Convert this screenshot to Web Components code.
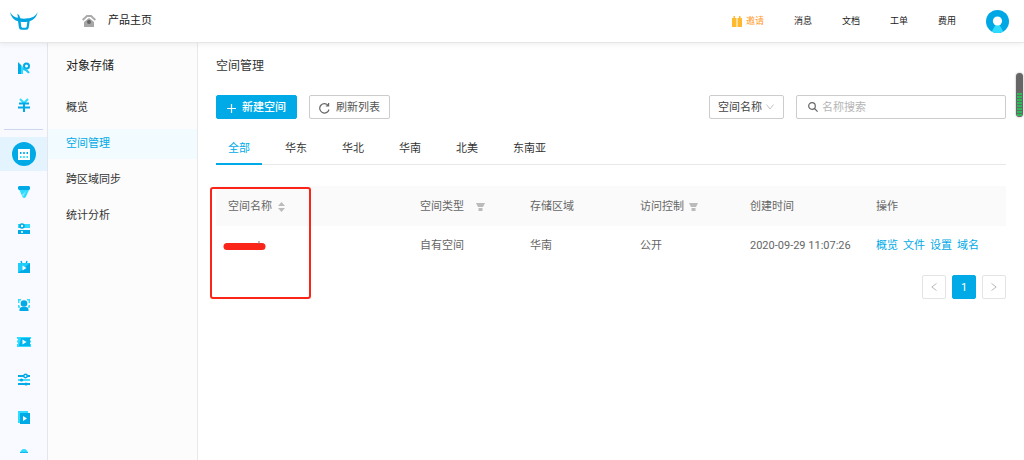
<!DOCTYPE html>
<html lang="zh-CN">
<head>
<meta charset="utf-8">
<meta name="viewport" content="width=device-width, initial-scale=1">
<title>空间管理</title>
<style>
  :root {
    --brand: #00aae7;
    --cyan: #2fdcff;
    --text: #333;
    --muted: #666;
    --line: #e8e8e8;
  }
  html, body { margin: 0; }
  body {
    background: #fff;
    color: var(--text);
    font: 11px/16px Roboto, "Noto Sans CJK SC", sans-serif;
  }
</style>
</head>
<body>
<console-app></console-app>

<script>
const define = (name, html, setup) => {
  const template = document.createElement('template');
  template.innerHTML = html;
  customElements.define(name, class extends HTMLElement {
    constructor() {
      super();
      this.attachShadow({ mode: 'open' }).append(template.content.cloneNode(true));
    }
    connectedCallback() {
      if (setup) setup(this, this.shadowRoot);
    }
  });
};

/* Top bar */
define('top-bar', `
<style>
  :host { display: flex; align-items: center; box-sizing: border-box; height: 43px; padding: 0 15px 0 10px;
    background: #fff; border-bottom: 1px solid #e6e6e6; box-shadow: 0 1px 6px rgba(0,0,0,.08); position: relative; z-index: 2; }
  a { color: #222; text-decoration: none; }
  svg { display: block; }
  .home { display: flex; align-items: center; gap: 12px; margin-left: 44px; }
  nav { display: flex; align-items: center; gap: 30px; margin-left: auto; font-size: 9px; }
  .invite { display: flex; align-items: center; gap: 4px; color: #ff9a1f; }
  .user { padding: 0; border: 0; background: none; }
</style>
<a href="#" aria-label="首页"><svg width="28" height="20" viewBox="0 0 84 60">
  <path fill="#00a4e0" d="M0 3C8 17 17 20 24 20L22 8L27 12L31 22C38 24 46 24 53 22C67 21 76 16 83 3C79 20 70 28 59 30L56 50Q55 56 49 56H34Q28 56 27 50L24 31C12 28 4 19 0 3ZM32 32L34 47Q35 50 38 50H46Q49 50 50 47L52 32Q42 34 32 32Z"/></svg></a>
<a class="home" href="#">
  <svg width="14" height="12" viewBox="0 0 14 12"><path fill="none" stroke="#aaa" stroke-width="2" d="M.6 5L5 1H9L13.400 5"/><path fill="#a6a6a6" d="M2 7L7 3L12 7V12H2Z"/><circle cx="7" cy="7" r="2" fill="#666"/></svg>
  <span>产品主页</span></a>
<nav>
  <a class="invite" href="#"><svg width="10" height="11" viewBox="0 0 10 11"><path fill="#ffb92e" d="M0 2H1.500V0H3V2H4.500V11H0ZM5.500 2H7V0H8.500V2H10V11H5.500Z"/></svg><span>邀请</span></a>
  <a href="#">消息</a><a href="#">文档</a><a href="#">工单</a><a href="#">费用</a>
  <button class="user" type="button" aria-label="账户"><svg width="23" height="23" viewBox="0 0 24 24"><circle cx="12" cy="12" r="12" fill="#00a7e5"/><path fill="#2fdcff" d="M12 12L18 22.400A12 12 0 0 1 6 22.400Z"/><circle cx="12" cy="11.500" r="4.800" fill="#fff"/></svg></button>
</nav>`);

/* Product rail */
const play = (x, y) => `<path fill="#fff" d="M${x} ${y}L${x + 4} ${y + 2.5}L${x} ${y + 5}Z"/>`;
const icons = {
  resource: '<path fill="#00aae7" d="M0 0L3 3V12H0Z"/><path fill="#2fdcff" d="M0 0L5 5V12H3V3Z"/><circle cx="8.500" cy="4" r="2.500" fill="none" stroke="#00aae7" stroke-width="2"/><path d="M5 7Q8 7 11 11" fill="none" stroke="#19c6f5" stroke-width="2"/>',
  finance: '<path d="M2 0L6 4L10 0" fill="none" stroke="#2fdcff" stroke-width="2"/><path d="M1 4.500H11M0 8.500H12M6 4V13" fill="none" stroke="#00aae7" stroke-width="2"/>',
  storage: '<circle cx="6" cy="6" r="12" fill="#00aae7"/><path fill="#fff" d="M0 1H12V12H0Z"/><path fill="#00aae7" d="M2 4H3.500V6H2ZM5.200 4H6.800V6H5.200ZM8.500 4H10V6H8.500Z"/><path fill="#2fdcff" d="M2 8H3.500V10H2ZM5.200 8H6.800V10H5.200ZM8.500 8H10V10H8.500Z"/>',
  cdn: '<path fill="#2fdcff" d="M1 3H11.500L7.800 11Q6 13 4.500 11Z"/><path fill="#8debff" d="M8 5L5 11L4 9Z"/><path fill="#00aae7" d="M1 0H11L12 1V3L11 4H1L0 3V1Z"/>',
  server: '<path fill="#2fdcff" d="M0 1H12V5H0Z"/><path fill="#00aae7" d="M0 7H12V11H0Z"/><circle cx="4" cy="3" r="2" fill="#fff" stroke="#00aae7" stroke-width="1.600"/><circle cx="4" cy="9" r="1.100" fill="#fff"/>',
  live: '<path d="M3 0L4 3M9 0L8 3" stroke="#00aae7" stroke-width="1.400"/><path fill="#00aae7" d="M0 2H12V12H0Z"/><path fill="#20cdf8" d="M0 2H12L0 12Z"/>' + play(4.5, 4.5),
  face: '<path d="M.7 4V.7H3M9 .7H11.300V4M.7 6V8H2M11.300 6V8H10" fill="none" stroke="#2fdcff" stroke-width="1.400"/><circle cx="6" cy="4.500" r="3.300" fill="#00aae7"/><path fill="#00aae7" d="M1.500 12V10Q2 8 4 8H8Q10 8 10.500 10V12Z"/>',
  video: '<path fill="#2fdcff" d="M-1 1H13V3H12V4.500H13V6.500H12V8H13V11H-1V8H0V6.500H-1V4.500H0V3H-1Z"/><path fill="#00b4ee" d="M3 2H12V10H1Z"/>' + play(4.5, 3.5),
  tune: '<path d="M0 2H12M0 10H12" stroke="#00aae7" stroke-width="1.800"/><path d="M0 6H12" stroke="#2fdcff" stroke-width="1.800"/><circle cx="7.500" cy="2" r="1.700" fill="#fff" stroke="#00aae7" stroke-width="1.500"/><circle cx="3.500" cy="6" r="1.600" fill="#00aae7"/><circle cx="8" cy="10" r="1.600" fill="#00aae7"/>',
  media: '<path fill="#2fdcff" d="M0 0H10V12H0Z"/><path fill="#00aae7" d="M2 2H12V13H2Z"/>' + play(5, 5),
  dome: '<path fill="#2fdcff" d="M2 4Q3 0 6 0T10 4Z"/><path fill="#14b9ee" d="M2 3H10V4H2Z"/>'
};
define('rail-item', `
<style>
  :host { display: block; }
  a { display: flex; align-items: center; justify-content: center; box-sizing: border-box; height: 34px; padding-left: 1px; }
  svg { display: block; overflow: visible; }
  :host([active]) a { background: #e3f4fe; }
</style>
<a href="#"><svg width="12" height="12" viewBox="0 0 12 12"></svg></a>`, (el, root) => {
  root.querySelector('a').setAttribute('aria-label', el.getAttribute('label'));
  root.querySelector('svg').innerHTML = icons[el.getAttribute('icon')];
});
define('product-rail', `
<style>
  :host { display: flex; flex-direction: column; box-sizing: border-box; width: 48px; padding-top: 8px; background: #f9faff;
    border-right: 1px solid #e4e6ec; overflow: hidden; }
  .pinned { display: flex; flex-direction: column; gap: 3px; }
  hr { width: 39px; height: 1px; margin: 7px 4px; border: 0; background: #ccd6ec; flex: none; }
  .products { flex: 1; display: flex; flex-direction: column; justify-content: space-between; margin-bottom: -12px; }
</style>
<div class="pinned"><slot name="pinned"></slot></div>
<hr>
<div class="products"><slot></slot></div>`);

/* Section menu */
define('menu-item', `
<style>
  :host { display: block; }
  a { display: block; padding: 0 18px; line-height: 30px; color: #333; text-decoration: none; }
  :host([active]) a { color: var(--brand); background: #f2fbff; }
</style>
<a href="#"><slot></slot></a>`);
define('side-menu', `
<style>
  :host { display: block; box-sizing: border-box; width: 150px; padding-top: 15px; background: #fcfcfc; border-right: 1px solid #e8e8e8; }
  h2 { margin: 0 18px 19px; font-size: 12px; line-height: 16px; font-weight: 400; color: #222; }
  nav { display: flex; flex-direction: column; gap: 6px; }
</style>
<h2><slot name="title"></slot></h2>
<nav><slot></slot></nav>`);

/* Toolbar */
define('tool-button', `
<style>
  :host { display: block; }
  button { display: flex; align-items: center; justify-content: center; gap: 6px; box-sizing: border-box; height: 24px; min-width: 81px;
    padding: 2px 9px 0; font: inherit; color: #555; background: #fff; border: 1px solid #ccc; border-radius: 2px; white-space: nowrap; }
  :host([primary]) button { color: #fff; background: var(--brand); border-color: var(--brand); font-weight: 500; }
</style>
<button type="button"><slot name="icon"></slot><slot></slot></button>`);
define('search-bar', `
<style>
  :host { display: flex; gap: 12px; }
  .field { position: relative; display: flex; align-items: center; box-sizing: border-box; height: 24px; border: 1px solid #ccc; border-radius: 2px; background: #fff; }
  .pick { width: 75px; }
  select { appearance: none; width: 100%; height: 22px; padding: 2px 8px 0; border: 0; background: none; font: inherit; color: #444; }
  .pick svg { position: absolute; right: 9px; pointer-events: none; }
  .search { width: 210px; gap: 4px; padding-left: 11px; }
  input { flex: 1; min-width: 0; height: 22px; box-sizing: border-box; padding: 0; border: 0; outline: 0; background: none; font: inherit; color: #333; }
  input::placeholder { color: #b5b5b5; }
</style>
<div class="field pick"><select aria-label="搜索字段"><option>空间名称</option></select>
  <svg width="8" height="6" viewBox="0 0 8 6" fill="none" stroke="#c4c4c4"><path d="M.5.5L4 5L7.500.5"/></svg></div>
<label class="field search"><svg width="10" height="10" viewBox="0 0 10 10" fill="none" stroke="#666" stroke-width="1.200"><circle cx="4" cy="4" r="3.300"/><path d="M6.500 6.500L9.600 9.600"/></svg>
  <input type="search" aria-label="名称搜索" placeholder="名称搜索"></label>`);

/* Region tabs */
define('region-tabs', `
<style>
  :host { display: flex; gap: 11px; height: 32px; border-bottom: 1px solid var(--line); }
</style>
<slot></slot>`, el => el.setAttribute('role', 'tablist'));
define('region-tab', `
<style>
  :host { display: block; }
  button { height: 33px; padding: 3px 12px 0; border: 0; border-bottom: 2px solid transparent; background: none; font: inherit; color: #333; }
  :host([active]) button { color: var(--brand); border-color: var(--brand); }
</style>
<button type="button" role="tab"><slot></slot></button>`);

/* Bucket table */
define('bucket-table', `
<style>
  :host { display: block; position: relative; }
  table { width: 100%; border-collapse: collapse; table-layout: fixed; color: var(--muted); }
  th, td { box-sizing: border-box; padding: 2px 0 0 12px; text-align: left; font-weight: 400; white-space: nowrap; }
  th { height: 40px; background: #fafafa; }
  td { height: 37px; }
  .name { width: 192px; } .mid { width: 110px; } .time { width: 126px; }
  .head { display: flex; align-items: center; }
  .sort { margin-left: 6px; }
  .far { margin-left: 12px; }
  .near { margin-left: 5px; }
  .links { display: flex; gap: 5px; }
  a { color: var(--brand); text-decoration: none; }
  .redacted { display: block; margin-left: -5px; }
  .marker { position: absolute; left: -6px; top: 1px; box-sizing: border-box; width: 101px; height: 112px; border: 2px solid #fb2418; border-radius: 3px; pointer-events: none; }
</style>
<table>
  <thead><tr>
    <th class="name"><div class="head">空间名称<svg class="sort" width="7" height="10" viewBox="0 0 7 10" fill="#bbb"><path d="M0 4L3.500 0L7 4ZM0 6H7L3.500 10Z"/></svg></div></th>
    <th class="mid"><div class="head">空间类型<svg class="far" width="9" height="8" viewBox="0 0 9 8" fill="#bbb"><path d="M0 0H9L7 4H2ZM2.500 5H6.500V8H2.500Z"/></svg></div></th>
    <th class="mid">存储区域</th>
    <th class="mid"><div class="head">访问控制<svg class="near" width="9" height="8" viewBox="0 0 9 8" fill="#bbb"><path d="M0 0H9L7 4H2ZM2.500 5H6.500V8H2.500Z"/></svg></div></th>
    <th class="time">创建时间</th>
    <th>操作</th>
  </tr></thead>
  <tbody><tr>
    <td><svg class="redacted" width="43" height="10" viewBox="0 0 43 10"><path d="M4 5.500H39" stroke="#fb2418" stroke-width="7" stroke-linecap="round"/><path d="M36 0V3" stroke="#777"/></svg></td>
    <td>自有空间</td><td>华南</td><td>公开</td><td>2020-09-29 11:07:26</td>
    <td><div class="links"><a href="#">概览</a><a href="#">文件</a><a href="#">设置</a><a href="#">域名</a></div></td>
  </tr></tbody>
</table>
<div class="marker"></div>`);

define('page-nav', `
<style>
  :host { display: flex; justify-content: flex-end; gap: 6px; }
  button { display: flex; align-items: center; justify-content: center; box-sizing: border-box; width: 24px; height: 24px; padding: 0;
    background: #fff; border: 1px solid #e4e4e4; border-radius: 2px; font: inherit; }
  .current { padding-top: 2px; color: #fff; background: var(--brand); border-color: var(--brand); }
  svg { fill: none; stroke: #bbb; }
</style>
<button type="button" aria-label="上一页"><svg width="6" height="8" viewBox="0 0 6 8"><path d="M5.500.5L.8 4L5.500 7.500"/></svg></button>
<button type="button" class="current">1</button>
<button type="button" aria-label="下一页"><svg width="6" height="8" viewBox="0 0 6 8"><path d="M.5.5L5.200 4L.5 7.500"/></svg></button>`);

/* Floating activity meter at the window's right edge */
define('level-meter', `
<style>
  :host { position: fixed; z-index: 3; right: 1px; top: 73px; width: 7px; height: 44px; border-radius: 4px; background: #666; overflow: hidden;
    display: flex; align-items: flex-end; justify-content: center; box-shadow: 0 0 2px rgba(0,0,0,.4); }
  i { width: 5px; height: 23px; margin-bottom: 1px; background: repeating-linear-gradient(#2fb85a 0 2px, #51745c 2px 3px); }
</style><i></i>`);

define('console-app', `
<style>
  :host { display: flex; flex-direction: column; height: 100vh; overflow: hidden; }
  .body { flex: 1; min-height: 0; display: flex; }
  product-rail, side-menu { flex: none; }
  main { flex: 1; min-width: 0; padding: 15px 18px; }
  h1 { margin: 0 0 21px; font-size: 12px; line-height: 16px; font-weight: 400; color: #333; }
  .tools { display: flex; gap: 12px; margin-bottom: 13px; }
  search-bar { margin-left: auto; }
  bucket-table { margin: 21px 0 12px; }
  svg { display: block; }
</style>
<top-bar></top-bar>
<div class="body">
  <product-rail>
    <rail-item slot="pinned" icon="resource" label="资源"></rail-item>
    <rail-item slot="pinned" icon="finance" label="财务"></rail-item>
    <rail-item active icon="storage" label="对象存储"></rail-item>
    <rail-item icon="cdn" label="CDN"></rail-item>
    <rail-item icon="server" label="云主机"></rail-item>
    <rail-item icon="live" label="直播"></rail-item>
    <rail-item icon="face" label="人脸识别"></rail-item>
    <rail-item icon="video" label="视频"></rail-item>
    <rail-item icon="tune" label="数据处理"></rail-item>
    <rail-item icon="media" label="媒体"></rail-item>
    <rail-item icon="dome" label="云服务"></rail-item>
  </product-rail>
  <side-menu>
    <span slot="title">对象存储</span>
    <menu-item>概览</menu-item>
    <menu-item active>空间管理</menu-item>
    <menu-item>跨区域同步</menu-item>
    <menu-item>统计分析</menu-item>
  </side-menu>
  <main>
    <h1>空间管理</h1>
    <div class="tools">
      <tool-button primary><svg slot="icon" width="9" height="9" viewBox="0 0 9 9" stroke="#fff" stroke-width="1.200"><path d="M4.500 0V9M0 4.500H9"/></svg>新建空间</tool-button>
      <tool-button><svg slot="icon" width="11" height="11" viewBox="0 0 11 11" fill="none" stroke="#666" stroke-width="1.200"><path d="M9.300 2.700A4.700 4.700 0 1 0 10 6.500M9.600 0V3H6.800"/></svg>刷新列表</tool-button>
      <search-bar></search-bar>
    </div>
    <region-tabs>
      <region-tab active>全部</region-tab>
      <region-tab>华东</region-tab>
      <region-tab>华北</region-tab>
      <region-tab>华南</region-tab>
      <region-tab>北美</region-tab>
      <region-tab>东南亚</region-tab>
    </region-tabs>
    <bucket-table></bucket-table>
    <page-nav></page-nav>
  </main>
</div>
<level-meter></level-meter>`);
</script>
</body>
</html>
